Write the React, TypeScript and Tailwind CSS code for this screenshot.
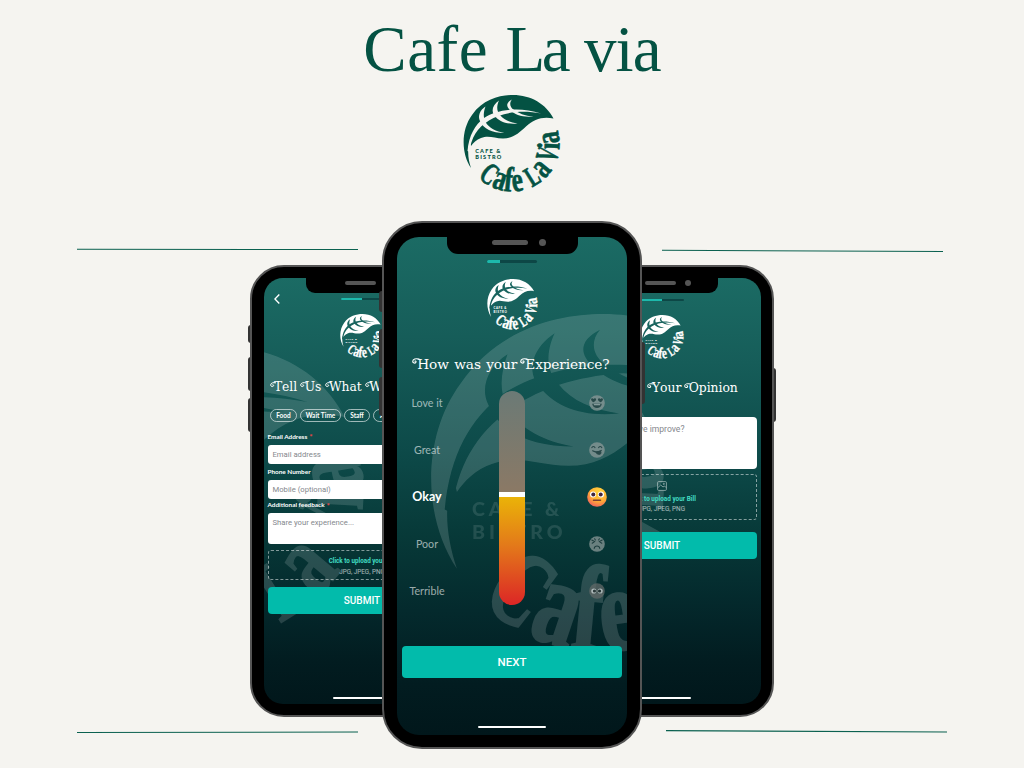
import React, { useId } from "react";

type Glyph = [string, number, number, number];

// character, angle from the bottom of the circle, font size, horizontal scale
const RING: Glyph[] = [
  ["C", -37, 31, 0.66],
  ["a", -18.5, 35, 0.72],
  ["f", -5.5, 35, 0.74],
  ["e", 8, 34, 0.74],
  ["L", 32, 29, 0.64],
  ["a", 50, 35, 0.7],
  ["V", 73.5, 32, 0.54],
  ["i", 87, 32, 0.75],
  ["a", 99.5, 34, 0.72],
];

function Logo({ className, faint = false }: { className: string; faint?: boolean }) {
  const id = useId();
  return (
    <svg
      viewBox="0 0 98 98"
      className={`overflow-visible ${className}`}
      fill="currentColor"
      aria-hidden="true"
    >
      <mask id={id} maskUnits="userSpaceOnUse" x="-2" y="-2" width="104" height="104">
        <rect x="-2" y="-2" width="104" height="104" fill="white" />
        <g fill="black">
          <path d="M4.5 56C6 40 12 30 21 23C33 15 55 11 78 18.5C57 14.500 38 18 26 25.500C14 33 8 43 6.500 57Z" />
          <path d="M47 15C43 11.500 43 7.500 49 4.500C46 8 47 12 50.500 14.500C55 18 62 21 70.500 21.500C60 22.500 52 20 47 15Z" />
          <path d="M31 20C28 15.500 30 9.500 36 5.500C33.500 11 33.500 16 37 20C41 25 47 27.500 54.500 28.500C44 29.500 36 27 31 20Z" />
          <path d="M17 26C14.500 21 17 15 22.500 11.500C20.500 17 20 22 22.500 27C26 33 33 36.500 41.500 38C29 38 20.500 34 17 26Z" />
        </g>
      </mask>
      <path
        mask={`url(#${id})`}
        d="M8 73C-2 58 -2 35 9 20C20 4 37 0 50 0C68 0 83 9 90.500 23.500C80 21 71 24 63 31.500C56 38 50 43.500 40 43.500C31 43.500 26 40 18 43C13.500 44.500 10 48 8 51L7 47C4 55 5 64 8 73Z"
      />
      <g
        fontFamily="Lato, sans-serif"
        fontWeight="900"
        fontSize="5.600"
        opacity={faint ? 0.75 : 1}
      >
        <text x="12.300" y="58" textLength="25" lengthAdjust="spacing">CAFE &amp;</text>
        <text x="12.300" y="64.400" textLength="26" lengthAdjust="spacing">BISTRO</text>
      </g>
      <g
        fontFamily="'Liberation Serif', serif"
        fontWeight="bold"
        textAnchor="middle"
        stroke="currentColor"
        strokeWidth="0.700"
      >
        {RING.map(([ch, angle, size, sx], i) => (
          <text
            key={i}
            fontSize={size}
            transform={`translate(49 49) rotate(${-angle}) translate(0 47.500) scale(${sx} 1)`}
          >
            {ch}
          </text>
        ))}
      </g>
    </svg>
  );
}

function Swash({ children }: { children: string }) {
  return (
    <span className="relative ml-[0.2em] inline-block">
      {children}
      <svg
        viewBox="0 0 8 8"
        className="absolute top-[0.42em] -left-[0.36em] size-[0.54em]"
        fill="none"
        stroke="currentColor"
        strokeWidth="1.200"
        aria-hidden="true"
      >
        <path d="M8 1.200C4 .2 1 1 .8 3.500C.7 5.800 4 6.200 4.400 4.300C4.500 3.200 3.200 2.900 2.700 3.700" />
      </svg>
    </span>
  );
}

function Progress({ track, fill }: { track: string; fill: string }) {
  return (
    <div className={`${track} shrink-0 overflow-hidden rounded-full bg-[#0d4746]`}>
      <div className={`${fill} h-full bg-[#1db9ac]`} />
    </div>
  );
}

const SCREEN =
  "relative flex h-full w-full flex-col items-center overflow-hidden bg-[linear-gradient(180deg,#1b6b64_0%,#165d59_20%,#0d4a49_43%,#073938_60%,#042a2d_75%,#021c20_90%,#01171b_100%)] text-white";

function SidePhone({
  children,
  side,
}: {
  children: React.ReactNode;
  side: "left" | "right";
}) {
  const key = "absolute w-[3px] bg-[#333]";
  return (
    <section className="relative mt-11 h-[452px] w-[224px] shrink-0">
      {side === "left" ? (
        <>
          <i className={`${key} top-[60px] -left-[2px] h-[18px] rounded-l-sm`} />
          <i className={`${key} top-[92px] -left-[2px] h-[34px] rounded-l-sm`} />
          <i className={`${key} top-[133px] -left-[2px] h-[34px] rounded-l-sm`} />
        </>
      ) : (
        <i className={`${key} top-[103px] -right-[2px] h-[54px] rounded-r-sm`} />
      )}
      <div className="relative h-full w-full rounded-[34px] border-[2.500px] border-[#555] bg-black px-[11.500px] py-[11px]">
        <div className={`${SCREEN} rounded-[19px]`}>
          <Logo
            faint
            className="absolute top-[69px] -left-[189px] size-[292px] max-w-none opacity-14"
          />
          <div className="absolute -top-px flex h-[16px] w-[112px] items-start justify-center rounded-b-[9px] bg-black">
            <span className="mt-[4px] -ml-[3px] h-[4px] w-[31px] rounded-full bg-[#555]" />
            <span className="absolute top-[3px] right-[27px] size-[6px] rounded-full bg-[#555]" />
          </div>
          {children}
        </div>
      </div>
    </section>
  );
}

function Face({ mood }: { mood: string }) {
  const okay = mood === "Okay";
  return (
    <svg
      viewBox="0 0 20 20"
      className={okay ? "size-5" : "size-4 opacity-75"}
      fill="none"
      stroke="#263f40"
      strokeWidth="1.300"
      strokeLinecap="round"
      aria-hidden="true"
    >
      <defs>
        <radialGradient id="sunny" cx=".62" cy=".25" r=".85">
          <stop offset="0" stopColor="#ffd83d" />
          <stop offset=".55" stopColor="#ffad35" />
          <stop offset="1" stopColor="#ef5365" />
        </radialGradient>
      </defs>
      <circle
        cx="10"
        cy="10"
        r="9.800"
        stroke="none"
        fill={okay ? "url(#sunny)" : mood === "Terrible" ? "#626968" : "#8b9998"}
      />
      {mood === "Love it" && (
        <g stroke="none" fill="#263f40">
          <path d="M2.500 5C3.500 3.500 5 4 5.600 5C6.500 3.600 8.600 4 8.900 5.200C9 7 7 8 5.500 9C4 8.500 2.600 7 2.500 5Z" />
          <path d="M17.500 5C16.500 3.500 15 4 14.400 5C13.500 3.600 11.400 4 11.100 5.200C11 7 13 8 14.500 9C16 8.500 17.400 7 17.500 5Z" />
          <path d="M4 11H16C15.500 18 4.500 18 4 11Z" />
          <path d="M6 11.500H14V12.800H6Z" fill="#bec6c5" />
        </g>
      )}
      {mood === "Great" && (
        <>
          <path d="M3.500 7Q5.500 4.500 7.500 7M12 7Q14 4.500 16 7M4.500 11Q10 14 15.500 10.500" />
          <path d="M8.500 12.500L14.500 11.500C16.500 16 11 17 8.500 12.500Z" fill="#263f40" />
        </>
      )}
      {okay && (
        <>
          <g stroke="none">
            <circle cx="6" cy="7.500" r="3" fill="white" />
            <circle cx="14" cy="7.500" r="3" fill="white" />
            <circle cx="6.300" cy="7.500" r="2" fill="#40263e" />
            <circle cx="13.700" cy="7.500" r="2" fill="#40263e" />
          </g>
          <path d="M6.500 13.300H13.500" stroke="#7a3e35" strokeWidth="1.500" />
        </>
      )}
      {mood === "Poor" && (
        <path d="M3.500 5L7 7L4 9M16.500 5L13 7L16 9M6.500 15.500Q7 12.500 10 12.500Q13 12.500 13.500 15.500M7 3.500L8 5M13 3.500L12 5" />
      )}
      {mood === "Terrible" && (
        <g stroke="none">
          <circle cx="6" cy="10" r="3.200" fill="#dde1e0" />
          <circle cx="14" cy="10" r="3.200" fill="#dde1e0" />
          <circle cx="6.800" cy="10" r="2" fill="#2b3334" />
          <circle cx="13.200" cy="10" r="2" fill="#2b3334" />
        </g>
      )}
    </svg>
  );
}

const MOODS = ["Love it", "Great", "Okay", "Poor", "Terrible"];

function MainPhone() {
  const key = "absolute w-[3px] bg-[#333]";
  return (
    <section className="relative z-10 -mx-[92px] h-[528px] w-[260px] shrink-0">
      <i className={`${key} top-[70px] -left-[3px] h-[21px] rounded-l-sm`} />
      <i className={`${key} top-[108px] -left-[3px] h-[39px] rounded-l-sm`} />
      <i className={`${key} top-[156px] -left-[3px] h-[39px] rounded-l-sm`} />
      <i className={`${key} top-[121px] -right-[3px] h-[62px] rounded-r-sm`} />
      <div className="relative h-full w-full rounded-[40px] border-[2.500px] border-[#555] bg-black px-[13px] pt-[14px] pb-[12px]">
        <div className={`${SCREEN} rounded-[22px]`}>
          <Logo
            faint
            className="absolute top-[77px] left-[32px] size-[342px] max-w-none opacity-15"
          />
          <div className="absolute -top-px flex h-[18px] w-[131px] justify-center rounded-b-[11px] bg-black">
            <span className="mt-[4px] -ml-[4px] h-[5px] w-[36px] rounded-full bg-[#555]" />
            <span className="absolute top-[3px] right-[32px] size-[7px] rounded-full bg-[#555]" />
          </div>
          <div className="relative flex w-full flex-col items-center pt-[23px]">
            <Progress track="h-[2.500px] w-[50px]" fill="w-1/4" />
            <Logo className="mt-[16.500px] size-[51px]" />
            <h2 className="mt-[22px] h-[24px] font-['DejaVu_Serif'] text-[13.700px] leading-[24px] font-normal tracking-[-0.120px] whitespace-nowrap [word-spacing:1.200px]">
              <Swash>H</Swash>ow was your <Swash>E</Swash>xperience?
            </h2>
            <div className="mt-[14.500px] grid h-[214px] w-full grid-cols-[60px_1fr_60px] grid-rows-[214px]">
              <ul className="-mt-[11px] flex flex-col">
                {MOODS.map((m) => (
                  <li
                    key={m}
                    className={`flex h-[47px] shrink-0 items-center justify-center font-['Lato'] whitespace-nowrap ${
                      m === "Okay"
                        ? "text-[12.500px] font-bold text-white"
                        : "text-[10.700px] text-white/60"
                    }`}
                  >
                    {m}
                  </li>
                ))}
              </ul>
              <div className="flex w-[26px] flex-col justify-self-center overflow-hidden rounded-full">
                <div className="h-[101px] bg-[linear-gradient(#6b7a76,#8b7965)]" />
                <div className="h-[5px] bg-white" />
                <div className="flex-1 bg-[linear-gradient(#eab308,#e3791a_45%,#dc2626)]" />
              </div>
              <ul className="-mt-[11px] flex flex-col">
                {MOODS.map((m) => (
                  <li key={m} className="flex h-[47px] shrink-0 items-center justify-center">
                    <Face mood={m} />
                  </li>
                ))}
              </ul>
            </div>
            <button className="mt-[41.500px] h-[32px] w-[220px] rounded-[4px] bg-[#02bbab] pt-px font-['Roboto'] text-[11.500px] font-medium">
              NEXT
            </button>
            <div className="mt-[48px] h-[2px] w-[68px] rounded-full bg-white" />
          </div>
        </div>
      </div>
    </section>
  );
}

function FieldLabel({ text, required = false }: { text: string; required?: boolean }) {
  return (
    <div className="flex h-[8px] items-center font-['Lato'] text-[6.400px] leading-none font-bold">
      {text}
      {required && <span className="ml-[2px] text-[8px] text-[#ef4444]">*</span>}
    </div>
  );
}

const FIELD =
  "rounded-[3px] bg-white pl-[5px] font-['Roboto'] text-[7.700px] text-[#85888d]";

function FeedbackPhone() {
  return (
    <SidePhone side="left">
      <svg
        viewBox="0 0 6 10"
        className="absolute top-[16px] left-[10.500px] h-[10px] w-[6px]"
        fill="none"
        stroke="white"
        strokeWidth="1.400"
        aria-hidden="true"
      >
        <path d="M5.300 .5L.9 5L5.300 9.500" />
      </svg>
      <div className="relative flex w-full flex-col items-center pt-[20px]">
        <Progress track="h-[2px] w-[43px]" fill="w-1/2" />
        <Logo className="mt-[14px] size-[44px]" />
        <h2 className="mt-[18.500px] h-[20px] self-start pl-[8px] font-['DejaVu_Serif'] text-[12.300px] leading-[20px] font-normal tracking-[-0.050px] whitespace-nowrap [word-spacing:1.300px]">
          <Swash>T</Swash>ell <Swash>U</Swash>s <Swash>W</Swash>hat <Swash>W</Swash>e
        </h2>
        <div className="mt-[12.500px] flex h-[13px] gap-[3px] self-start pl-[6.500px] font-['Lato'] text-[6.500px] leading-[11px] font-bold">
          <span className="w-[27px] rounded-full border border-white/60 text-center">Food</span>
          <span className="w-[41px] rounded-full border border-white/60 text-center">Wait Time</span>
          <span className="w-[26px] rounded-full border border-white/60 text-center">Staff</span>
          <span className="w-[41px] rounded-full border border-white/60 pl-[6px]">Ambience</span>
        </div>
        <div className="mt-[11px] flex w-[189px] flex-col">
          <FieldLabel text="Email Address" required />
          <div className={`${FIELD} mt-[3.500px] h-[19px] leading-[19px]`}>Email address</div>
          <div className="mt-[5px]">
            <FieldLabel text="Phone Number" />
          </div>
          <div className={`${FIELD} mt-[3px] h-[19px] leading-[19px]`}>Mobile (optional)</div>
          <div className="mt-[3px]">
            <FieldLabel text="Additional feedback" required />
          </div>
          <div className={`${FIELD} mt-[3.500px] h-[31px] leading-[20px]`}>
            Share your experience...
          </div>
          <div className="mt-[6px] flex h-[30px] flex-col items-center rounded-[3px] border border-dashed border-white/50 pt-[5px] font-['Roboto'] text-[6.300px] leading-[10.500px]">
            <span className="font-bold text-[#42dcc2]">Click to upload your Bill</span>
            <span className="text-white/65">JPG, JPEG, PNG</span>
          </div>
          <button className="mt-[7px] h-[27px] rounded-[4px] bg-[#02bbab] font-['Roboto'] text-[10px] font-medium">
            SUBMIT
          </button>
        </div>
        <div className="mt-[83px] h-[2px] w-[58px] rounded-full bg-white" />
      </div>
    </SidePhone>
  );
}

function OpinionPhone() {
  return (
    <SidePhone side="right">
      <div className="relative flex w-full flex-col items-center pt-[21px]">
        <Progress track="h-[2px] w-[43px]" fill="w-1/2" />
        <Logo className="mt-[14px] size-[44px]" />
        <h2 className="mt-[18.500px] h-[20px] pl-[19px] font-['DejaVu_Serif'] text-[12.400px] leading-[20px] font-normal tracking-[-0.050px] whitespace-nowrap [word-spacing:1px]">
          <Swash>S</Swash>hare <Swash>Y</Swash>our <Swash>O</Swash>pinion
        </h2>
        <div className="mt-[19.500px] flex w-[189px] flex-col">
          <div className="h-[52px] rounded-[4px] bg-white pt-[6px] text-right font-['Roboto'] text-[8.600px] leading-[13px] text-[#85888d]">
            <span className="mr-[72px]">How can we improve?</span>
          </div>
          <div className="mt-[5px] flex h-[46px] flex-col items-center rounded-[3px] border border-dashed border-white/50 pt-[6px] font-['Roboto'] text-[6.400px] leading-[10.500px]">
            <svg
              viewBox="0 0 10 10"
              className="size-[10px]"
              fill="none"
              stroke="currentColor"
              strokeWidth=".8"
              opacity=".6"
              aria-hidden="true"
            >
              <rect x=".6" y=".6" width="8.800" height="8.800" rx="1" />
              <path d="M1 6.500L3.700 4L6 6L7.500 5L9.200 6.700" />
              <circle cx="6.800" cy="2.900" r=".6" />
            </svg>
            <span className="mt-[2.500px] font-bold text-[#42dcc2]">Click to upload your Bill</span>
            <span className="text-white/65">JPG, JPEG, PNG</span>
          </div>
          <button className="mt-[12px] h-[27px] rounded-[4px] bg-[#02bbab] font-['Roboto'] text-[10px] font-medium">
            SUBMIT
          </button>
        </div>
        <div className="mt-[138px] h-[2px] w-[58px] rounded-full bg-white" />
      </div>
    </SidePhone>
  );
}

export default function App() {
  return (
    <main className="relative flex h-[768px] w-[1024px] flex-col items-center overflow-hidden bg-[#f5f4f0] text-[#045243]">
      <svg
        viewBox="0 0 1024 768"
        className="absolute inset-0 size-full"
        stroke="#0b6150"
        strokeWidth="1.100"
        aria-hidden="true"
      >
        <path d="M77 249.300L358 249.500M662 250.300L943 251.500M77 732.500L358 732M666 730.600L947 732" />
      </svg>
      <h1 className="mt-[10px] h-[85px] font-['Liberation_Serif'] text-[65px] leading-[78px] font-normal tracking-[-0.900px] whitespace-nowrap">
        <span className="tracking-[0.500px]">Cafe</span>{" "}
        <span className="ml-[2px] tracking-[-3.500px]">L</span>a{" "}
        <span className="-ml-[1px]">via</span>
      </h1>
      <Logo className="size-[98px] shrink-0" />
      <div className="mt-[28px] flex items-start justify-center">
        <FeedbackPhone />
        <MainPhone />
        <OpinionPhone />
      </div>
    </main>
  );
}
